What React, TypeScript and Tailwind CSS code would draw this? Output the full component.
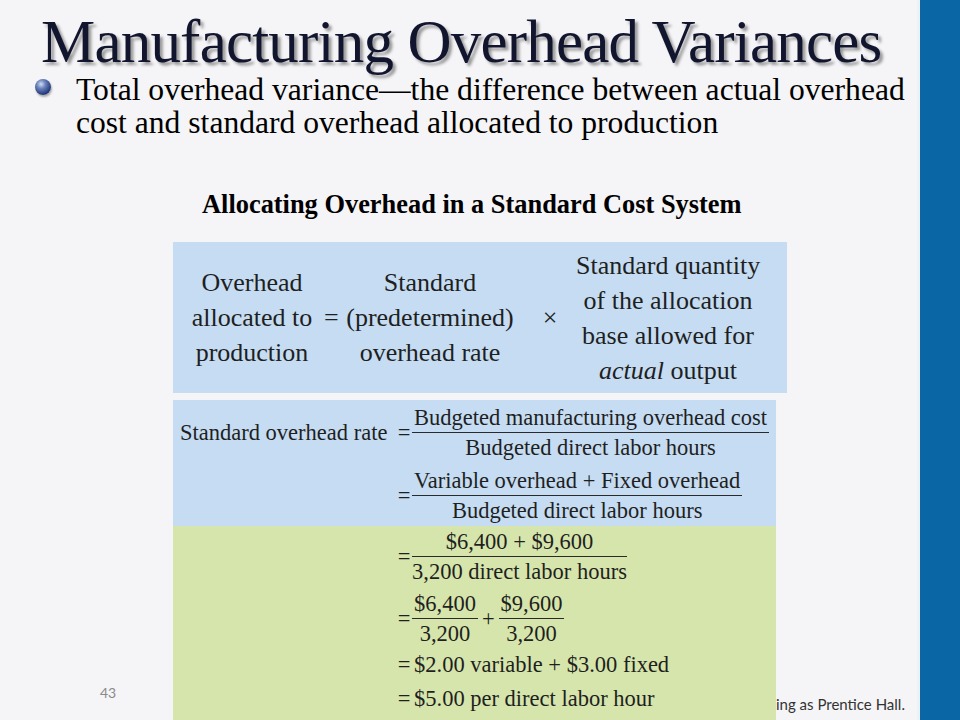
import React from 'react';

const serif = "font-['Liberation_Serif','Times_New_Roman',serif]";

interface FractionProps {
  num: React.ReactNode;
  den: React.ReactNode;
  width?: string;
}

// stacked fraction: numerator, rule, denominator
const Fraction: React.FC<FractionProps> = ({ num, den, width = '' }) => (
  <div className={`flex flex-col items-center ${width}`}>
    <div className="h-[28px] leading-[28px] whitespace-nowrap px-[2px]">{num}</div>
    <div className="h-px w-full bg-[#2a2a2a]" />
    <div className="h-[28px] leading-[30px] whitespace-nowrap">{den}</div>
  </div>
);

const Eq: React.FC = () => <div className="w-[14px] text-center">=</div>;

const App: React.FC = () => {
  return (
    <div className={`w-[960px] h-[720px] flex overflow-hidden bg-[#f5f4f6] ${serif}`}>
      <div className="w-[917px] flex flex-col">
        {/* Title */}
        <h1 className="mt-[11px] h-[61px] leading-[61px] pl-[41px] text-[61px] tracking-[-0.8px] whitespace-nowrap text-[#12152e] [text-shadow:3px_3px_3px_rgba(0,0,0,0.38)]">
          Manufacturing Overhead Variances
        </h1>

        {/* Bullet */}
        <div className="mt-[1px] flex">
          <div className="w-[76px] pl-[35px] pt-[6px]">
            <div className="w-[16px] h-[16px] rounded-full bg-[radial-gradient(circle_at_38%_32%,#d4def2_0%,#6b83bd_30%,#24397a_70%,#101d47_100%)] shadow-[1px_2px_2px_rgba(0,0,0,0.3)]" />
          </div>
          <p className="text-[31.6px] leading-[33px] text-black whitespace-nowrap">
            Total overhead variance—the difference between actual overhead
            <br />
            cost and standard overhead allocated to production
          </p>
        </div>

        {/* Exhibit caption */}
        <div className="mt-[50px] pl-[202px] h-[30px] leading-[30px] text-[26.4px] font-bold text-black whitespace-nowrap">
          Allocating Overhead in a Standard Cost System
        </div>

        {/* Top formula box */}
        <div className="mt-[23px] ml-[173px] w-[614px] h-[151px] bg-[#c5dcf2] flex items-center text-[26px] leading-[35px] text-[#1f1f1f]">
          <div className="w-[151px] pl-[7px] text-center whitespace-nowrap">
            Overhead
            <br />
            allocated to
            <br />
            production
          </div>
          <div className="w-[12px] text-center">=</div>
          <div className="w-[188px] text-center whitespace-nowrap">
            Standard
            <br />
            (predetermined)
            <br />
            overhead rate
          </div>
          <div className="w-[52px] text-center">×</div>
          <div className="w-[184px] text-center whitespace-nowrap">
            Standard quantity
            <br />
            of the allocation
            <br />
            base allowed for
            <br />
            <span className="italic">actual</span> output
          </div>
        </div>

        {/* Computation box + page furniture */}
        <div className="mt-[7px] flex flex-1">
          <div className="w-[173px] flex items-end pl-[100px] pb-[17px]">
            <span className="font-['Lato',sans-serif] text-[14px] text-[#8a8a8a]">43</span>
          </div>

          <div className="w-[603px] flex flex-col text-[22.5px] text-[#1f1f1f]">
            <div className="bg-[#c5dcf2] pt-[4px] pb-[2px]">
              <div className="flex items-center">
                <div className="w-[224px] pl-[7px] whitespace-nowrap">Standard overhead rate</div>
                <Eq />
                <div className="ml-[1px]">
                  <Fraction num="Budgeted manufacturing overhead cost" den="Budgeted direct labor hours" />
                </div>
              </div>
              <div className="mt-[6px] flex items-center">
                <div className="w-[224px]" />
                <Eq />
                <div className="ml-[1px]">
                  <Fraction num="Variable overhead + Fixed overhead" den="Budgeted direct labor hours" />
                </div>
              </div>
            </div>

            <div className="flex-1 bg-[#d6e5ab] pt-[2px]">
              <div className="flex items-center">
                <div className="w-[224px]" />
                <Eq />
                <div className="ml-[1px]">
                  <Fraction num="$6,400 + $9,600" den="3,200 direct labor hours" />
                </div>
              </div>
              <div className="mt-[5px] flex items-center">
                <div className="w-[224px]" />
                <Eq />
                <div className="ml-[1px] flex items-center gap-[4px]">
                  <Fraction num="$6,400" den="3,200" />
                  <span>+</span>
                  <Fraction num="$9,600" den="3,200" />
                </div>
              </div>
              <div className="mt-[4px] h-[28px] leading-[28px] flex">
                <div className="w-[224px]" />
                <Eq />
                <div className="ml-[3px] whitespace-nowrap">$2.00 variable + $3.00 fixed</div>
              </div>
              <div className="mt-[6px] h-[28px] leading-[28px] flex">
                <div className="w-[224px]" />
                <Eq />
                <div className="ml-[3px] whitespace-nowrap">$5.00 per direct labor hour</div>
              </div>
            </div>
          </div>

          <div className="flex-1 flex items-end pb-[5px]">
            <span className="font-['Lato',sans-serif] text-[15px] text-[#333] whitespace-nowrap">
              ing as Prentice Hall.
            </span>
          </div>
        </div>
      </div>

      <div className="w-[3px] bg-[#edf2f6]" />
      <div className="flex-1 bg-[#0b66a6]" />
    </div>
  );
};

export default App;
